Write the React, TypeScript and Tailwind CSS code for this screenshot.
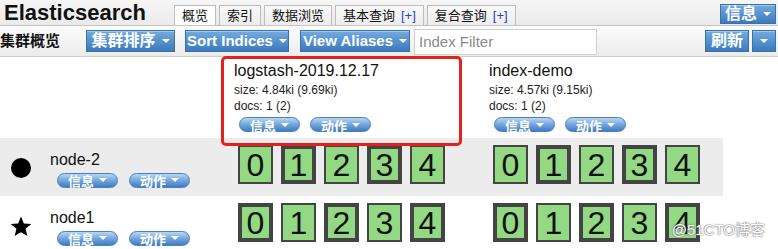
import React from "react";

const F = "font-['Liberation_Sans','Noto_Sans_CJK_SC',sans-serif]";

function Caret() {
  return (
    <span className="inline-block w-0 h-0 border-l-[4px] border-r-[4px] border-t-[4px] border-l-transparent border-r-transparent border-t-white" />
  );
}

function BlueBtn({ children, cls }: { children?: React.ReactNode; cls: string }) {
  return (
    <div
      className={
        "flex items-center justify-center gap-[6px] bg-linear-to-b from-[#74aade] to-[#3a7abd] border border-[#3b70a8] text-white font-bold shadow-[inset_0_1px_0_rgba(255,255,255,0.35)] " +
        cls
      }
    >
      {children}
    </div>
  );
}

function Pill({ label }: { label: string }) {
  return (
    <div className="flex items-center justify-center gap-[5px] w-[61px] h-[15px] rounded-full bg-linear-to-b from-[#b9d6f2] via-[#73a7dc] to-[#3f7dc2] border border-[#4a80bb] text-white text-[13px] leading-none font-bold">
      <span className="mt-[3px]">{label}</span>
      <Caret />
    </div>
  );
}

function Shard({ n, primary }: { n: number; primary: boolean }) {
  return (
    <div
      className={
        "w-[35px] h-[39px] bg-[#93d883] border-[#444] flex items-center justify-center text-[32px] leading-none text-[#111] " +
        (primary ? "border-[4px]" : "border-[2px]")
      }
    >
      {n}
    </div>
  );
}

function ShardRow({ primaries }: { primaries: boolean[] }) {
  return (
    <div className="flex gap-[8px] pl-[6px] pt-[7px]">
      {primaries.map((p, i) => (
        <Shard key={i} n={i} primary={p} />
      ))}
    </div>
  );
}

function IndexHead({ name, size, docs, marked }: { name: string; size: string; docs: string; marked?: boolean }) {
  return (
    <div className="relative pl-[2px] pt-[3px]">
      <div className="text-[16px] leading-[22px] text-[#111]">{name}</div>
      <div className="text-[12px] leading-[16px] text-[#222]">{size}</div>
      <div className="text-[12px] leading-[16px] text-[#222]">{docs}</div>
      <div className="flex gap-[10px] pl-[5px] mt-[3px]">
        <Pill label="信息" />
        <Pill label="动作" />
      </div>
      {marked && (
        <div className="absolute left-[-11px] top-[-1px] w-[241px] h-[90px] border-[3px] border-[#e5211d] rounded-[5px] z-10 pointer-events-none" />
      )}
    </div>
  );
}

function NodeCell({ name, icon }: { name: string; icon: React.ReactNode }) {
  return (
    <div className="w-[232px] flex items-center">
      <div className="w-[42px] flex justify-center pt-[2px]">{icon}</div>
      <div className="pl-[8px] pt-[2px]">
        <div className="text-[16px] leading-[22px] text-[#111]">{name}</div>
        <div className="flex gap-[11px] pl-[7px] mt-[2px]">
          <Pill label="信息" />
          <Pill label="动作" />
        </div>
      </div>
    </div>
  );
}

export default function App() {
  const tabs: { label: string; plus?: boolean; active?: boolean }[] = [
    { label: "概览", active: true },
    { label: "索引" },
    { label: "数据浏览" },
    { label: "基本查询", plus: true },
    { label: "复合查询", plus: true },
  ];
  return (
    <div className={F + " relative w-[778px] h-[249px] overflow-hidden bg-white"}>
      {/* top bar */}
      <div className="flex h-[26px] bg-linear-to-b from-[#f6f6f6] to-[#eaeaea] border-b border-[#c4c4c4]">
        <div className="pl-[4px] text-[22px] font-bold leading-[26px] text-[#111]">Elasticsearch</div>
        <div className="flex gap-[3px] ml-[28px] self-end">
          {tabs.map((t) => (
            <div
              key={t.label}
              className={
                "h-[20px] px-[7px] border border-b-0 border-[#bdbdbd] text-[13px] leading-[20px] text-[#111] " +
                (t.active ? "bg-white" : "bg-linear-to-b from-[#fafafa] to-[#ececec]")
              }
            >
              {t.label}
              {t.plus && <span className="text-[#2244bb] ml-[6px]">[+]</span>}
            </div>
          ))}
        </div>
        <div className="ml-auto mr-[2px] mt-[4px]">
          <BlueBtn cls="w-[56px] h-[20px] text-[16px] leading-none">
            信息
            <Caret />
          </BlueBtn>
        </div>
      </div>
      {/* second bar */}
      <div className="flex items-center h-[31px] bg-linear-to-b from-[#fcfcfc] to-[#ececec] border-b border-[#cdcdcd]">
        <div className="w-[86px] text-[15px] font-bold text-[#111]">集群概览</div>
        <BlueBtn cls="w-[89px] h-[22px] text-[16px]">
          集群排序
          <Caret />
        </BlueBtn>
        <BlueBtn cls="ml-[10px] w-[104px] h-[22px] text-[15px]">
          Sort Indices
          <Caret />
        </BlueBtn>
        <BlueBtn cls="ml-[11px] w-[110px] h-[22px] text-[15px]">
          View Aliases
          <Caret />
        </BlueBtn>
        <div className="ml-[4px] w-[183px] h-[26px] mt-[2px] bg-white border border-[#cfcfcf] pl-[4px] text-[15px] leading-[24px] text-[#8a8a8a]">
          Index Filter
        </div>
        <BlueBtn cls="ml-auto w-[44px] h-[22px] text-[16px]">刷新</BlueBtn>
        <BlueBtn cls="ml-[3px] mr-[2px] w-[24px] h-[22px]">
          <Caret />
        </BlueBtn>
      </div>
      {/* index headers */}
      <div className="flex h-[81px]">
        <div className="w-[232px]" />
        <div className="w-[255px]">
          <IndexHead name="logstash-2019.12.17" size="size: 4.84ki (9.69ki)" docs="docs: 1 (2)" marked />
        </div>
        <div className="w-[236px]">
          <IndexHead name="index-demo" size="size: 4.57ki (9.15ki)" docs="docs: 1 (2)" />
        </div>
      </div>
      {/* node-2 row */}
      <div className="flex h-[58px] w-[723px] bg-[#ececec]">
        <NodeCell name="node-2" icon={<div className="w-[20px] h-[20px] rounded-full bg-black" />} />
        <div className="w-[255px]">
          <ShardRow primaries={[false, true, false, true, false]} />
        </div>
        <div className="w-[236px]">
          <ShardRow primaries={[false, true, false, true, false]} />
        </div>
      </div>
      {/* node1 row */}
      <div className="flex h-[58px] w-[723px]">
        <NodeCell
          name="node1"
          icon={
            <svg width="22" height="21" viewBox="0 0 24 23">
              <path d="M12 0.5l3.1 7.6 8.2 0.6-6.3 5.3 2 8-7-4.3-7 4.3 2-8-6.3-5.3 8.2-0.6z" fill="#000" />
            </svg>
          }
        />
        <div className="w-[255px]">
          <ShardRow primaries={[true, false, true, false, true]} />
        </div>
        <div className="w-[236px]">
          <ShardRow primaries={[true, false, true, false, true]} />
        </div>
      </div>
      {/* watermark */}
      <div className="absolute right-[13px] bottom-[8px] text-[15px] text-white [text-shadow:0_0_2px_#777,0_0_1px_#555] z-20">
        @51CTO博客
      </div>
    </div>
  );
}
